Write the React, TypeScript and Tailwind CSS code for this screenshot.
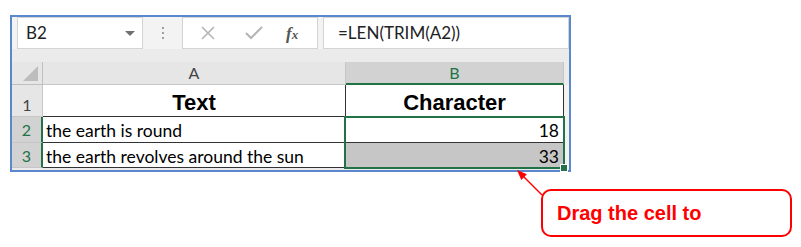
import React from 'react';

const GREEN = '#217346';

const Cell = ({ className, children }: { className: string; children?: React.ReactNode }) => (
  <div className={`flex ${className}`}>{children}</div>
);

export default function App() {
  return (
    <div className="relative w-[801px] h-[247px] bg-white overflow-hidden">
      {/* Sheet window */}
      <div className="ml-[10px] mt-[15px] w-[561px] border-2 border-[#5b87cf] bg-[#f3f3f3] font-['Lato',sans-serif] text-black">
        {/* Formula bar */}
        <div className="flex h-[32px] pl-[5px]">
          <div className="w-[126px] bg-white border border-[#d4d4d4] flex items-center justify-between pl-[8px] pr-[7px]">
            <span className="text-[17px] text-[#222]">B2</span>
            <span className="w-0 h-0 border-l-[5px] border-r-[5px] border-t-[5px] border-l-transparent border-r-transparent border-t-[#707070]" />
          </div>
          <div className="w-[39px] flex flex-col items-center justify-center gap-[3px]">
            <span className="w-[2px] h-[2px] bg-[#a0a0a0]" />
            <span className="w-[2px] h-[2px] bg-[#a0a0a0]" />
            <span className="w-[2px] h-[2px] bg-[#a0a0a0]" />
          </div>
          <div className="w-[136px] bg-white border border-[#d4d4d4] flex items-center">
            <svg width="14" height="14" viewBox="0 0 14 14" className="ml-[18px]">
              <path d="M1 1 L13 13 M13 1 L1 13" stroke="#b4b4b4" strokeWidth="1.6" fill="none" />
            </svg>
            <svg width="18" height="14" viewBox="0 0 18 14" className="ml-[30px]">
              <path d="M1 7 L6 12 L17 1" stroke="#b4b4b4" strokeWidth="2" fill="none" />
            </svg>
            <span className="ml-[23px] font-['Liberation_Serif',serif] italic font-bold text-[17px] text-[#555] leading-none">
              f<span className="text-[13px]">x</span>
            </span>
          </div>
          <div className="ml-[5px] flex-1 bg-white border border-[#d4d4d4] flex items-center pl-[14px]">
            <span className="text-[17px] text-[#222]">=LEN(TRIM(A2))</span>
          </div>
        </div>
        <div className="h-[13px] bg-[#ebebeb]" />

        {/* Grid */}
        <div className="relative grid grid-cols-[31px_303px_218px_5px] grid-rows-[23px_32px_26px_25px_2px] bg-[#ebebeb]">
          {/* Header row */}
          <Cell className="bg-[#e6e6e6] border-r border-b border-[#bfbfbf] items-end justify-end pr-[4px] pb-[3px]">
            <span className="w-0 h-0 border-b-[15px] border-l-[15px] border-b-[#bdbdbd] border-l-transparent" />
          </Cell>
          <Cell className="bg-[#e6e6e6] border-r border-b border-[#c6c6c6] items-center justify-center text-[16px] text-[#444]">A</Cell>
          <Cell className="bg-[#d2d2d2] border-r border-[#c6c6c6] border-b-2 border-b-[#217346] items-center justify-center text-[16px] text-[#217346]">B</Cell>
          <Cell className="bg-[#ebebeb]" />

          {/* Row 1 */}
          <Cell className="bg-[#e6e6e6] border-r border-b border-[#c6c6c6] items-end justify-center pb-[3px] text-[16px] text-[#444] leading-none">1</Cell>
          <Cell className="bg-white border-r border-b border-[#333] items-end justify-center pb-[2px]">
            <span className="font-['Liberation_Sans',sans-serif] font-bold text-[22px] leading-none">Text</span>
          </Cell>
          <Cell className="bg-white border-r border-b border-[#333] items-end justify-center pb-[2px]">
            <span className="font-['Liberation_Sans',sans-serif] font-bold text-[22px] leading-none">Character</span>
          </Cell>
          <Cell className="bg-[#f3f3f3]" />

          {/* Row 2 */}
          <Cell className="bg-[#d2d2d2] border-b border-[#c6c6c6] border-r-2 border-r-[#217346] items-end justify-center pb-[4px] text-[16px] text-[#217346] leading-none">2</Cell>
          <Cell className="bg-white border-r border-b border-[#333] items-end pl-[3px] pb-[3px] text-[17.5px] leading-none">the earth is round</Cell>
          <Cell className="bg-white border-r border-b border-[#333] items-end justify-end pr-[4px] pb-[3px] text-[17.5px] leading-none">18</Cell>
          <Cell className="bg-[#f3f3f3]" />

          {/* Row 3 */}
          <Cell className="bg-[#d2d2d2] border-b border-[#c6c6c6] border-r-2 border-r-[#217346] items-end justify-center pb-[3px] text-[16px] text-[#217346] leading-none">3</Cell>
          <Cell className="bg-white border-r border-b border-[#333] items-end pl-[3px] pb-[2px] text-[17.5px] leading-none">the earth revolves around the sun</Cell>
          <Cell className="bg-[#c6c6c6] border-r border-b border-[#333] items-end justify-end pr-[4px] pb-[2px] text-[17.5px] leading-none">33</Cell>
          <Cell className="bg-[#f3f3f3]" />

          {/* bottom strip */}
          <div className="col-span-4 bg-[#ebebeb]" />

          {/* Selection B2:B3 */}
          <div className="absolute left-[332px] top-[54px] w-[221px] h-[53px] border-2" style={{ borderColor: GREEN }}>
            <span className="absolute -right-[4px] -bottom-[4px] w-[6px] h-[6px] bg-[#217346] outline outline-1 outline-white" />
          </div>
        </div>
      </div>

      {/* Callout */}
      <div className="ml-[541px] mt-[17px] w-[251px] h-[48px] border-2 border-[#ff0000] rounded-[10px] flex items-center pl-[14px]">
        <span className="font-['Liberation_Sans',sans-serif] font-bold text-[20px] text-[#ff0000] leading-none">Drag the cell to</span>
      </div>

      {/* Arrow */}
      <svg className="absolute left-0 top-0 pointer-events-none" width="801" height="247">
        <line x1="542" y1="195" x2="522" y2="175" stroke="#ff0000" strokeWidth="1.5" />
        <polygon points="517,170 526.9,174.3 521.3,179.9" fill="#ff0000" />
      </svg>
    </div>
  );
}
